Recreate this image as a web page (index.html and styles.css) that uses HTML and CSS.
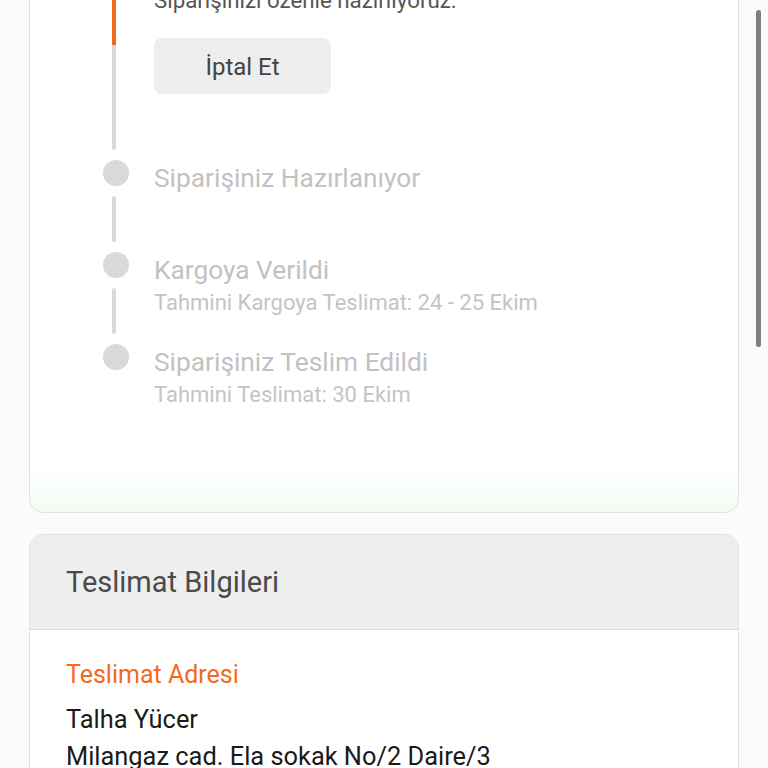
FILE: index.html
```html
<!DOCTYPE html>
<html lang="tr">
<head>
    <meta charset="UTF-8">
    <meta name="viewport" content="width=device-width, initial-scale=1.0">
    <title>Sipariş Detayı</title>
    <link rel="stylesheet" href="styles.css">
</head>
<body>

    <div class="page">

        <!-- Order status timeline -->
        <div class="card order-card">

            <div class="step step-first">
                <div class="rail">
                    <span class="dot dot-active"></span>
                    <span class="line line-progress"></span>
                </div>
                <div class="step-body">
                    <div class="step-title title-active">Siparişiniz Alındı</div>
                    <div class="step-desc">Siparişinizi özenle hazırlıyoruz.</div>
                    <button class="cancel-btn">İptal Et</button>
                </div>
            </div>

            <div class="step">
                <div class="rail">
                    <span class="dot"></span>
                    <span class="line"></span>
                </div>
                <div class="step-body">
                    <div class="step-title">Siparişiniz Hazırlanıyor</div>
                </div>
            </div>

            <div class="step">
                <div class="rail">
                    <span class="dot"></span>
                    <span class="line"></span>
                </div>
                <div class="step-body">
                    <div class="step-title">Kargoya Verildi</div>
                    <div class="step-sub">Tahmini Kargoya Teslimat: 24 - 25 Ekim</div>
                </div>
            </div>

            <div class="step">
                <div class="rail">
                    <span class="dot"></span>
                </div>
                <div class="step-body">
                    <div class="step-title">Siparişiniz Teslim Edildi</div>
                    <div class="step-sub">Tahmini Teslimat: 30 Ekim</div>
                </div>
            </div>

        </div>

        <!-- Delivery info -->
        <div class="card info-card">
            <div class="info-header">Teslimat Bilgileri</div>
            <div class="info-body">
                <div class="info-label">Teslimat Adresi</div>
                <div class="info-line">Talha Yücer</div>
                <div class="info-line">Milangaz cad. Ela sokak No/2 Daire/3</div>
            </div>
        </div>

    </div>

    <div class="scroll-thumb"></div>

</body>
</html>
```

FILE: styles.css
```css
html, body {
    margin: 0;
    padding: 0;
    background-color: #fdfafa;
    font-family: Roboto, "Noto Sans", sans-serif;
    overflow: hidden;
}
.page {
    padding: 0 29px 40px;
}
.card {
    background-color: #fff;
    border: 1px solid #e2e2e2;
    border-radius: 14px;
}

/* Timeline card */
.order-card {
    margin-top: -78px;
    padding: 30px 40px 76px 72px;
    background: linear-gradient(to bottom, #fff 0, #fff calc(100% - 46px), #f2fcf4 100%);
}
.step {
    display: flex;
    gap: 24px;
    min-height: 92px;
}
.step-first {
    min-height: 207px;
}
.rail {
    width: 28px;
    display: flex;
    flex-direction: column;
    align-items: center;
    flex-shrink: 0;
}
.dot {
    width: 26px;
    height: 26px;
    border-radius: 50%;
    background-color: #d9d9d9;
}
.dot-active {
    background-color: #f26a1b;
}
.line {
    flex: 1;
    width: 4px;
    margin: 10px 4px 10px 0;
    border-radius: 2px;
    background-color: #d9d9d9;
}
.line-progress {
    background: linear-gradient(to bottom, #f26a1b 0, #f26a1b 56px, #d9d9d9 56px);
}
.step-body {
    padding-top: 3px;
}
.step-title {
    font-size: 26.3px;
    line-height: 30px;
    color: #c2c2c2;
}
.title-active {
    color: #f26a1b;
}
.step-desc {
    font-size: 22.3px;
    line-height: 28px;
    color: #555;
}
.step-sub {
    margin-top: 3px;
    font-size: 22px;
    line-height: 30px;
    color: #c4c4c4;
}
.cancel-btn {
    margin-top: 24px;
    width: 177px;
    height: 56px;
    border: none;
    border-radius: 8px;
    background-color: #eeeeee;
    color: #444;
    font-family: inherit;
    font-size: 24px;
    padding-top: 3px;
    cursor: pointer;
}

/* Delivery info card */
.info-card {
    margin-top: 21px;
    overflow: hidden;
}
.info-header {
    padding: 29px 36px 29px;
    font-size: 29px;
    line-height: 36px;
    color: #4a4a4a;
    background-color: #eeeeee;
    border-bottom: 1px solid #dcdcdc;
}
.info-body {
    padding: 26px 36px 30px;
}
.info-label {
    margin-bottom: 8px;
    font-size: 25px;
    line-height: 37px;
    color: #f36a1c;
}
.info-line {
    font-size: 25.4px;
    line-height: 37px;
    color: #1a1a1a;
}

/* Overlay scrollbar */
.scroll-thumb {
    position: fixed;
    top: 10px;
    right: 7px;
    width: 5px;
    height: 337px;
    border-radius: 3px;
    background-color: #7f7f7f;
}
```
